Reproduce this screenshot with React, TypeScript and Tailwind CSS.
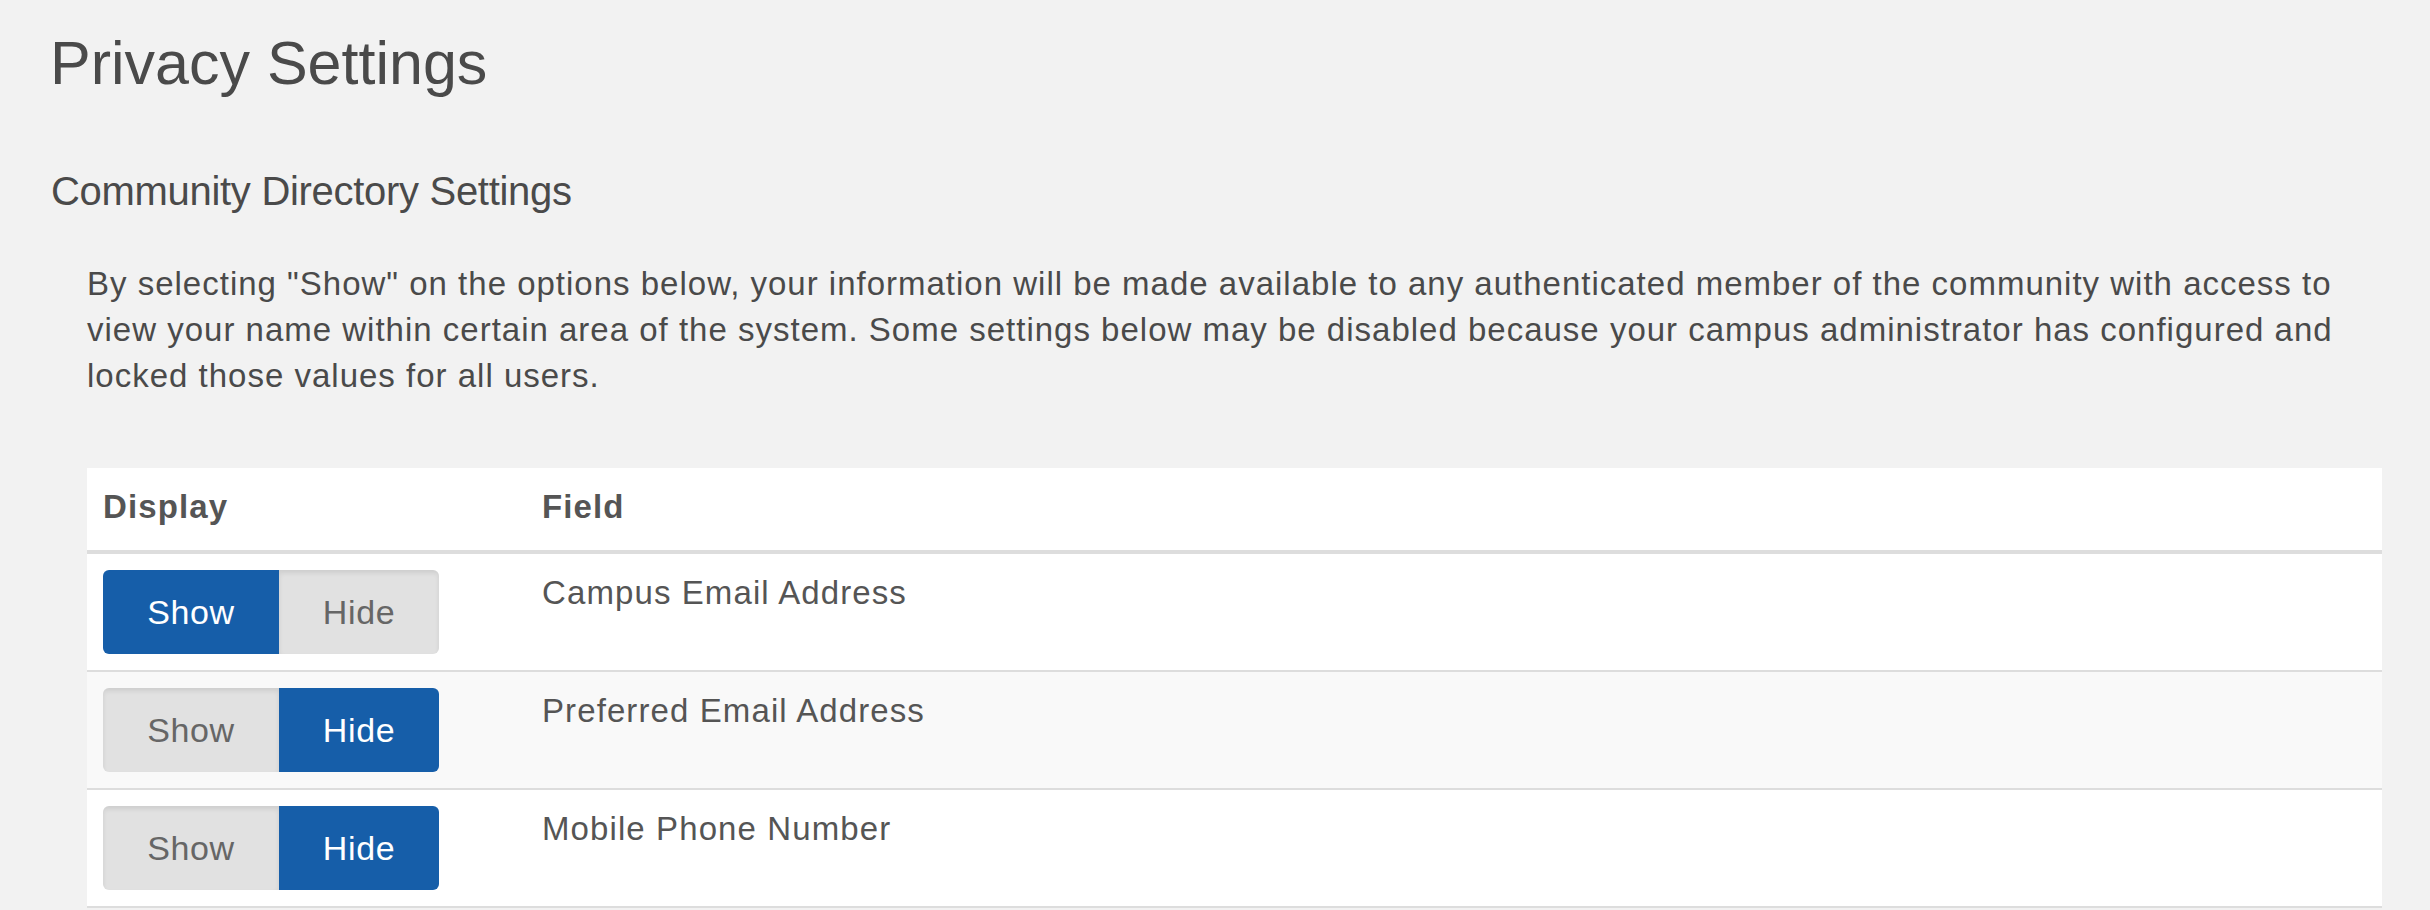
const rows = [
  { field: 'Campus Email Address', show: true },
  { field: 'Preferred Email Address', show: false },
  { field: 'Mobile Phone Number', show: false },
]

function Toggle({ show }: { show: boolean }) {
  const on = 'bg-[#165ea9] text-white'
  const off = 'bg-[#e1e1e1] text-[#666] shadow-[inset_0_3px_5px_rgba(0,0,0,0.09)]'
  return (
    <div className="flex h-[84px] w-[336px] overflow-hidden rounded-[6px] text-[34px] leading-[48px] tracking-[0.6px]">
      <div className={`flex w-[176px] items-center justify-center ${show ? on : off}`}>
        Show
      </div>
      <div className={`flex w-[160px] items-center justify-center ${show ? off : on}`}>
        Hide
      </div>
    </div>
  )
}

export default function App() {
  return (
    <div
      className="min-h-[910px] w-full bg-[#f2f2f2] text-[#555]"
      style={{ fontFamily: '"Liberation Sans", Arial, sans-serif' }}
    >
      <h1 className="pl-[50px] pt-[29px] text-[61px] font-normal leading-[68px] text-[#4a4a4a]">
        Privacy Settings
      </h1>

      <h3 className="mt-[70px] pl-[51px] text-[40px] font-normal leading-[48px] tracking-[-0.3px] text-[#4a4a4a]">
        Community Directory Settings
      </h3>

      <div className="ml-[87px] mr-[48px]">
        <p className="mt-[46px] text-[33px] leading-[46px] tracking-[1px] text-[#4a4a4a]">
          By selecting "Show" on the options below, your information will be made available to any
          authenticated member of the community with access to
          <br />
          view your name within certain area of the system. Some settings below may be disabled
          because your campus administrator has configured and
          <br />
          locked those values for all users.
        </p>

        {/* Display / Field table */}
        <table className="mt-[69px] w-full border-collapse text-[33px] leading-[46px] tracking-[1.1px]">
          <thead>
            <tr className="bg-white">
              {['Display', 'Field'].map((col) => (
                <th
                  key={col}
                  className={`h-[82px] border-b-[4px] border-[#ddd] px-4 pb-[20px] pt-4 text-left align-top font-bold ${
                    col === 'Display' ? 'w-[439px]' : ''
                  }`}
                >
                  {col}
                </th>
              ))}
            </tr>
          </thead>
          <tbody>
            {rows.map((row, i) => (
              <tr
                key={row.field}
                className={`border-b-2 border-[#ddd] ${i % 2 === 1 ? 'bg-[#f9f9f9]' : 'bg-white'}`}
              >
                <td className="h-[116px] px-4 py-4 align-top">
                  <Toggle show={row.show} />
                </td>
                <td className="px-4 py-4 align-top">{row.field}</td>
              </tr>
            ))}
          </tbody>
        </table>
      </div>
    </div>
  )
}
